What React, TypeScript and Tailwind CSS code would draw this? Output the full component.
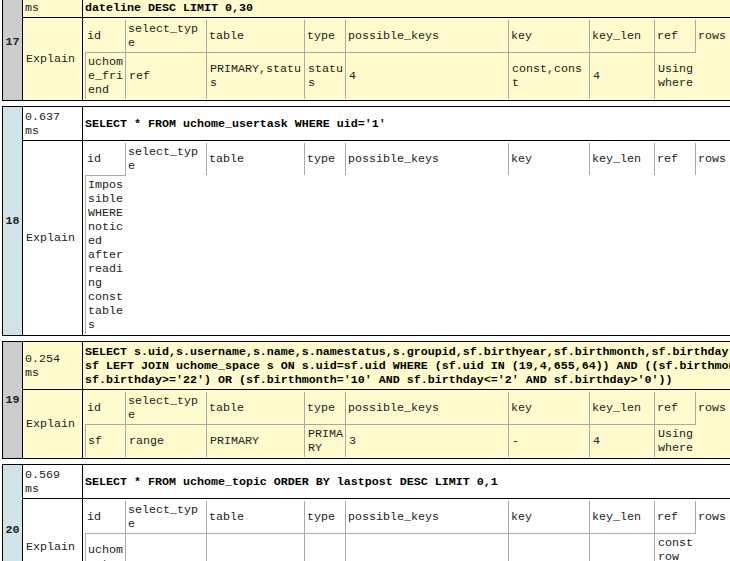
const HEAD = ['id', 'select_type', 'table', 'type', 'possible_keys', 'key', 'key_len', 'ref', 'rows'];

function Inner({ row, single }: { row?: string[]; single?: string }) {
  return (
    <table className="table-fixed w-[650px] border-separate border-spacing-0 ml-[2px] mt-[2px] mb-[1px] [overflow-wrap:anywhere]">
      <colgroup>
        <col className="w-[41px]" />
        <col className="w-[81px]" />
        <col className="w-[98px]" />
        <col className="w-[41px]" />
        <col className="w-[163px]" />
        <col className="w-[81px]" />
        <col className="w-[65px]" />
        <col className="w-[41px]" />
        <col className="w-[39px]" />
      </colgroup>
      <tbody>
        <tr>
          {HEAD.map((h, i) => (
            <td
              key={h}
              className={
                i < 8
                  ? 'border-r border-[#aaaaaa] pl-[2px] pr-[2px] py-[2px] align-middle'
                  : 'pl-[2px] py-[2px] align-middle'
              }
            >
              {h}
            </td>
          ))}
        </tr>
        {single ? (
          <tr>
            <td className="border-l border-t border-[#aaaaaa] pl-[2px] pr-[1px] py-[2px] align-middle">{single}</td>
            <td colSpan={8}></td>
          </tr>
        ) : (
          <tr>
            {(row ?? []).map((c, i) => (
              <td
                key={i}
                className={
                  'border-t border-[#aaaaaa] pr-[1px] py-[2px] align-middle ' +
                  (i === 0 ? 'border-l pl-[2px] ' : 'pl-[3px] ') +
                  (i < 7 ? 'border-r' : '')
                }
              >
                {c}
              </td>
            ))}
            <td></td>
          </tr>
        )}
      </tbody>
    </table>
  );
}

function Card({
  n,
  time,
  sql,
  tone,
  row,
  single,
}: {
  n: number;
  time: string;
  sql: string[];
  tone: 'y' | 'w';
  row?: string[];
  single?: string;
}) {
  const yellow = tone === 'y';
  return (
    <div
      className={
        'flex w-[790px] ml-[2px] border-y border-l border-black ' +
        (yellow ? 'bg-[#fffbcc]' : 'bg-white')
      }
    >
      <div
        className={
          'w-[20px] shrink-0 flex items-center justify-center border-r border-black font-bold ' +
          (yellow ? 'bg-[#cccccc]' : 'bg-[#cfe3e8]')
        }
      >
        {n}
      </div>
      <div className="flex-1 flex flex-col">
        <div className="flex border-b border-black">
          <div className="w-[60px] shrink-0 border-r border-black pl-[2px] pt-[3px] pb-[2px] flex flex-col justify-center">
            {time.split(' ').map((t) => (
              <div key={t}>{t}</div>
            ))}
          </div>
          <div className="flex-1 flex flex-col justify-center pl-[2px] pt-[3px] pb-[2px] font-bold text-black whitespace-nowrap">
            {sql.map((s) => (
              <div key={s}>{s}</div>
            ))}
          </div>
        </div>
        <div className="flex flex-1">
          <div className="w-[60px] shrink-0 border-r border-black pl-[3px] flex items-center">Explain</div>
          <div className="flex-1">
            <Inner row={row} single={single} />
          </div>
        </div>
      </div>
    </div>
  );
}

export default function App() {
  return (
    <div className="w-[730px] h-[561px] overflow-hidden bg-white text-[#222222] text-[11.67px] leading-[14px] font-['Liberation_Mono','Courier_New',monospace]">
      <div className="flex flex-col gap-[5px] -mt-[17px]">
        <Card
          n={17}
          time="0.412 ms"
          tone="y"
          sql={['SELECT * FROM uchome_friend WHERE uid=\'1\' AND status=\'1\' ORDER BY', 'dateline DESC LIMIT 0,30']}
          row={['uchome_friend', 'ref', 'PRIMARY,status', 'status', '4', 'const,const', '4', 'Using where']}
        />
        <Card
          n={18}
          time="0.637 ms"
          tone="w"
          sql={["SELECT * FROM uchome_usertask WHERE uid='1'"]}
          single="Impossible WHERE noticed after reading const tables"
        />
        <Card
          n={19}
          time="0.254 ms"
          tone="y"
          sql={[
            'SELECT s.uid,s.username,s.name,s.namestatus,s.groupid,sf.birthyear,sf.birthmonth,sf.birthday',
            "sf LEFT JOIN uchome_space s ON s.uid=sf.uid WHERE (sf.uid IN (19,4,655,64)) AND ((sf.birthmonth='10' AND",
            "sf.birthday>='22') OR (sf.birthmonth='10' AND sf.birthday<='2' AND sf.birthday>'0'))",
          ]}
          row={['sf', 'range', 'PRIMARY', 'PRIMARY', '3', '-', '4', 'Using where']}
        />
        <Card
          n={20}
          time="0.569 ms"
          tone="w"
          sql={['SELECT * FROM uchome_topic ORDER BY lastpost DESC LIMIT 0,1']}
          row={['uchome_topic', '', '', '', '', '', '', 'const row not found']}
        />
      </div>
    </div>
  );
}
